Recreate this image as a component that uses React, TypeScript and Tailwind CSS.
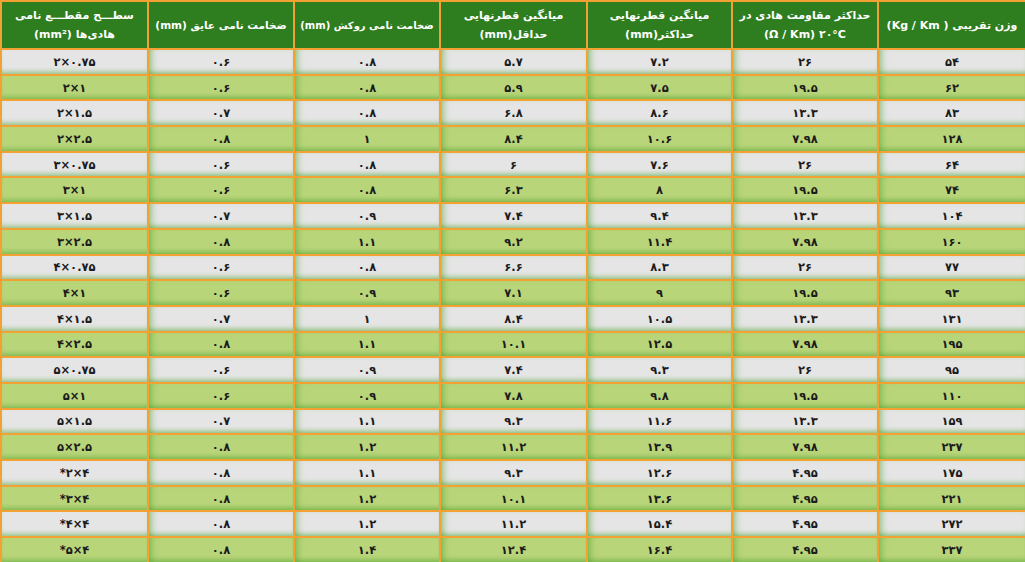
import React from 'react';

const rows: string[][] = [
  ['۵۴', '۲۶', '۷.۲', '۵.۷', '۰.۸', '۰.۶', '۲×۰.۷۵'],
  ['۶۲', '۱۹.۵', '۷.۵', '۵.۹', '۰.۸', '۰.۶', '۲×۱'],
  ['۸۳', '۱۳.۳', '۸.۶', '۶.۸', '۰.۸', '۰.۷', '۲×۱.۵'],
  ['۱۲۸', '۷.۹۸', '۱۰.۶', '۸.۴', '۱', '۰.۸', '۲×۲.۵'],
  ['۶۴', '۲۶', '۷.۶', '۶', '۰.۸', '۰.۶', '۳×۰.۷۵'],
  ['۷۴', '۱۹.۵', '۸', '۶.۳', '۰.۸', '۰.۶', '۳×۱'],
  ['۱۰۴', '۱۳.۳', '۹.۴', '۷.۴', '۰.۹', '۰.۷', '۳×۱.۵'],
  ['۱۶۰', '۷.۹۸', '۱۱.۴', '۹.۲', '۱.۱', '۰.۸', '۳×۲.۵'],
  ['۷۷', '۲۶', '۸.۳', '۶.۶', '۰.۸', '۰.۶', '۴×۰.۷۵'],
  ['۹۳', '۱۹.۵', '۹', '۷.۱', '۰.۹', '۰.۶', '۴×۱'],
  ['۱۳۱', '۱۳.۳', '۱۰.۵', '۸.۴', '۱', '۰.۷', '۴×۱.۵'],
  ['۱۹۵', '۷.۹۸', '۱۲.۵', '۱۰.۱', '۱.۱', '۰.۸', '۴×۲.۵'],
  ['۹۵', '۲۶', '۹.۳', '۷.۴', '۰.۹', '۰.۶', '۵×۰.۷۵'],
  ['۱۱۰', '۱۹.۵', '۹.۸', '۷.۸', '۰.۹', '۰.۶', '۵×۱'],
  ['۱۵۹', '۱۳.۳', '۱۱.۶', '۹.۳', '۱.۱', '۰.۷', '۵×۱.۵'],
  ['۲۳۷', '۷.۹۸', '۱۳.۹', '۱۱.۲', '۱.۲', '۰.۸', '۵×۲.۵'],
  ['۱۷۵', '۴.۹۵', '۱۲.۶', '۹.۳', '۱.۱', '۰.۸', '*۲×۴'],
  ['۲۲۱', '۴.۹۵', '۱۳.۶', '۱۰.۱', '۱.۲', '۰.۸', '*۳×۴'],
  ['۲۷۲', '۴.۹۵', '۱۵.۴', '۱۱.۲', '۱.۲', '۰.۸', '*۴×۴'],
  ['۳۳۷', '۴.۹۵', '۱۶.۴', '۱۲.۴', '۱.۴', '۰.۸', '*۵×۴'],
];

const widths = ['w-[148px]', 'w-[146px]', 'w-[145px]', 'w-[147px]', 'w-[146px]', 'w-[146px]', 'w-[147px]'];

const th = 'border-2 border-[#f3a133] p-0 whitespace-nowrap';

const App = () => {
  return (
    <div className="w-[1025px] h-[562px] overflow-hidden bg-white" style={{ fontFamily: '"DejaVu Sans", sans-serif' }}>
      <table dir="rtl" className="w-[1025px] table-fixed border-collapse border-2 border-[#f3a133]">
        <colgroup>
          {widths.map((w, i) => (
            <col key={i} className={w} />
          ))}
        </colgroup>
        <thead>
          <tr className="h-[48px] bg-[#2e7e20] text-white text-[11px] font-bold leading-[19px]">
            <th className={th}>وزن تقریبی ( Kg / Km)</th>
            <th className={th}>
              حداکثر مقاومت هادی در
              <br />
              <span dir="ltr">(Ω / Km) ۲۰°C</span>
            </th>
            <th className={th}>
              میانگین قطرنهایی
              <br />
              حداکثر(mm)
            </th>
            <th className={th}>
              میانگین قطرنهایی
              <br />
              حداقل(mm)
            </th>
            <th className={`${th} text-[10px]`}>ضخامت نامی روکش (mm)</th>
            <th className={`${th} text-[10.5px]`}>ضخامت نامی عایق (mm)</th>
            <th className={th}>
              سطـــح مقطـــع نامی
              <br />
              هادی‌ها (mm²)
            </th>
          </tr>
        </thead>
        <tbody>
          {rows.map((r, i) => (
            <tr
              key={i}
              className={`h-[25.7px] text-[11.5px] leading-[14px] font-bold text-[#1b1b1b] ${
                i % 2 === 0 ? 'bg-[#e5e5e5]' : 'bg-[#b9d57a]'
              }`}
            >
              {r.map((c, j) => (
                <td
                  key={j}
                  className={`border-2 border-[#f3a133] text-center p-0 ${
                    j < 6
                      ? 'shadow-[inset_7px_0_7px_-5px_rgba(72,160,44,0.6),inset_0_-5px_5px_-3px_rgba(72,160,44,0.55)]'
                      : 'shadow-[inset_0_-5px_5px_-3px_rgba(72,160,44,0.55)]'
                  }`}
                >
                  {j === 6 ? <span dir="ltr">{c}</span> : c}
                </td>
              ))}
            </tr>
          ))}
        </tbody>
      </table>
    </div>
  );
};

export default App;
